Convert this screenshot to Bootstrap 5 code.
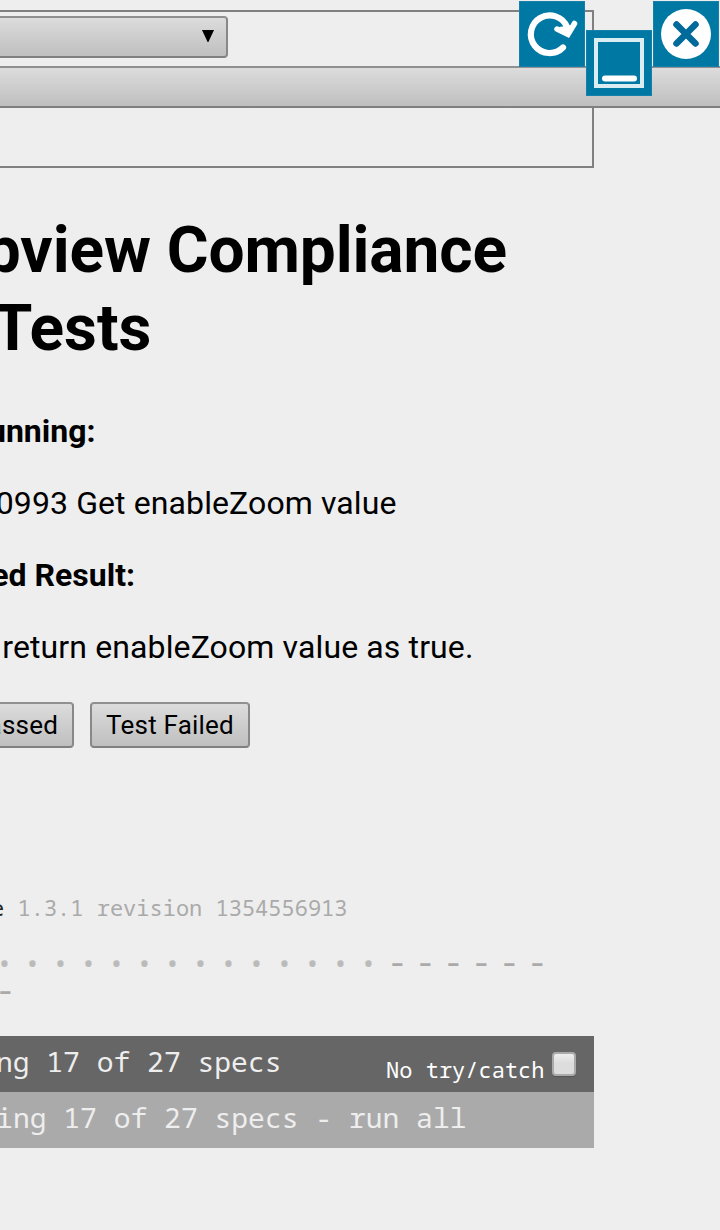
<!DOCTYPE html>
<html lang="en">
<head>
<meta charset="utf-8">
<title>Webview Compliance Tests</title>
<link href="https://cdn.jsdelivr.net/npm/bootstrap@5.3.0/dist/css/bootstrap.min.css" rel="stylesheet">
<style>
body{background:#eee;color:#000;font-family:Roboto,sans-serif;width:720px;height:1230px}
.frame{margin-top:10px;width:594px;height:158px;border:2px solid #808080;border-left:0;padding-top:4px}
.native{background:linear-gradient(#dcdcdc,#bfbfbf);border:2px solid #808080;border-top-color:#909090;border-right-color:#888;border-left-color:#888;border-radius:4px;color:#000}
.picker{width:228px;height:42px;border-left:0;border-radius:0 4px 4px 0;padding:0 12px 2px 0}
.strip{top:66px;height:42px;border-width:2px 0;border-radius:0}
.tool{width:66px;height:66px;background:#0078a4;border:1px solid #1580a9}
.tool svg{display:block;width:64px;height:64px}
.t-reload{left:519px;top:1px}.t-min{left:586px;top:30px}.t-close{left:653px;top:1px}
.run{display:flex;justify-content:flex-end;white-space:pre}
.title{font-size:64px;font-weight:700;line-height:78px;margin:44px 0 44px}
.r506{width:507px;letter-spacing:-.1px}.r150{width:151.500px}
.copy{font-size:32px;line-height:38px;margin-bottom:34px}
.r96{width:95.500px}.r396{width:396.500px;letter-spacing:.1px}.r135{width:135px}.r472{width:473.500px;letter-spacing:.12px}
.keys{height:46px;margin-top:36px;gap:16px}
.key{font-size:26px;line-height:42px;text-align:center;white-space:pre;letter-spacing:.2px}
.k1{width:74px;border-left:0;border-radius:0 4px 4px 0;padding-right:14px}.k2{width:160px}
.report{font-family:"Droid Sans Mono","Noto Sans Mono","DejaVu Sans Mono",monospace;color:#aaa;margin-top:145px}
.version{font-size:22px;line-height:28px;width:347.500px}
.name{color:#222}
.marks{margin:28px 0 0 -4px;width:570px;font-size:28px;line-height:28px}
.marks span{width:28px;height:28px}
.marks .ok{color:#bbb}
.marks .skip{font-weight:500;line-height:26px;transform:scaleX(1.2);transform-origin:4px 50%}
.line{height:56px;width:594px;color:#eee;font-size:28px;line-height:50px}
.a{background:#666;margin-top:31px}.b{background:#aaa}
.r281{width:281.500px}.r466{width:466.500px}
.trap{font-size:22px;color:#fff;line-height:66px}
.tick{width:24px;height:24px;margin:16px 18px 0 7.500px;border:2px solid #aaa;border-radius:4px;background:linear-gradient(#eee,#ddd 45%);box-shadow:0 1px 1px #555}
</style>
</head>
<body class="position-relative overflow-hidden">
<div class="overflow-hidden">
<div class="frame"><div class="native picker d-flex align-items-center justify-content-end"><svg width="12" height="12" viewBox="0 0 12 12"><path d="M0 0h12L6.4 12h-.8z"/></svg></div></div>
<h1 class="title"><span class="run r506">bview Compliance</span><span class="run r150">Tests</span></h1>
<p class="copy run r96 fw-bold">unning:</p>
<p class="copy run r396">0993 Get enableZoom value</p>
<p class="copy run r135 fw-bold">ed Result:</p>
<p class="copy run r472 mb-0">return enableZoom value as true.</p>
<div class="keys d-flex"><div class="native key k1 d-flex justify-content-end">assed</div><div class="native key k2">Test Failed</div></div>
<div class="report">
<div class="version run"><span class="name">e</span> 1.3.1 revision 1354556913</div>
<div class="marks d-flex flex-wrap"><span class="ok">•</span><span class="ok">•</span><span class="ok">•</span><span class="ok">•</span><span class="ok">•</span><span class="ok">•</span><span class="ok">•</span><span class="ok">•</span><span class="ok">•</span><span class="ok">•</span><span class="ok">•</span><span class="ok">•</span><span class="ok">•</span><span class="ok">•</span><span class="skip">-</span><span class="skip">-</span><span class="skip">-</span><span class="skip">-</span><span class="skip">-</span><span class="skip">-</span><span class="skip">-</span></div>
<div class="line a d-flex justify-content-between"><div class="run r281">ng 17 of 27 specs</div><div class="d-flex trap">No try/catch<i class="tick"></i></div></div>
<div class="line b"><div class="run r466">ing 17 of 27 specs - run all</div></div>
</div>
</div>
<div class="native strip position-absolute start-0 w-100"></div>
<div class="tool t-reload position-absolute"><svg viewBox="0 0 64 64" fill="none" stroke="#fff"><path d="M43 45.500A18.800 18.800 0 1 1 47 25" stroke-width="6.200" stroke-linecap="round"/><path d="M37 27l11 5.500L54.500 21.500" stroke-width="5.500" stroke-linecap="round" stroke-linejoin="miter"/><path d="M39 25l9 8 5-10z" fill="#fff" stroke="none"/></svg></div>
<div class="tool t-min position-absolute"><svg viewBox="0 0 64 64" fill="none" stroke="#fff"><path d="M9 9h46v46H9z" stroke="#d9edf3" stroke-width="4"/><path d="M18 47.500h29" stroke-width="6" stroke-linecap="round"/></svg></div>
<div class="tool t-close position-absolute"><svg viewBox="0 0 64 64"><circle cx="32" cy="32" r="25" fill="#fff"/><path d="M22.500 22.500l19 19m0-19l-19 19" stroke="#006a9a" stroke-width="6.500" stroke-linecap="round"/></svg></div>
<script src="https://cdn.jsdelivr.net/npm/bootstrap@5.3.0/dist/js/bootstrap.bundle.min.js"></script>
</body>
</html>
